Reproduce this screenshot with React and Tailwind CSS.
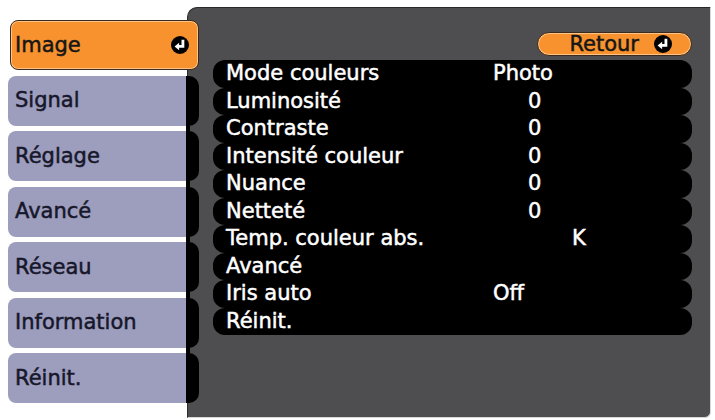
import React from "react";

function EnterIcon({ size = 17 }) {
  return (
    <svg width={size} height={size} viewBox="0 0 16 16" className="shrink-0">
      <circle cx="8" cy="8" r="8" fill="#000" />
      <path d="M10.6 3.4 V9.3 H6.6" fill="none" stroke="#fff" strokeWidth="2.5" strokeLinejoin="miter" />
      <path d="M3.2 9.3 L7.2 6 L7.2 12.6 Z" fill="#fff" />
    </svg>
  );
}

const tabs = ["Signal", "Réglage", "Avancé", "Réseau", "Information", "Réinit."];

const rows = [
  { label: "Mode couleurs", value: "Photo", v: "ml-0" },
  { label: "Luminosité", value: "0", v: "ml-[35px]" },
  { label: "Contraste", value: "0", v: "ml-[35px]" },
  { label: "Intensité couleur", value: "0", v: "ml-[35px]" },
  { label: "Nuance", value: "0", v: "ml-[35px]" },
  { label: "Netteté", value: "0", v: "ml-[35px]" },
  { label: "Temp. couleur abs.", value: "K", v: "ml-[79px]" },
  { label: "Avancé", value: "", v: "ml-0" },
  { label: "Iris auto", value: "Off", v: "ml-0" },
  { label: "Réinit.", value: "", v: "ml-0" },
];

export default function App() {
  return (
    <div className="w-[715px] h-[420px] bg-white flex overflow-hidden font-['DejaVu_Sans',sans-serif] text-[21px] leading-none [-webkit-text-stroke:0.5px]">
      {/* Tabs column */}
      <div className="relative z-10 w-[200px] shrink-0 pt-[20px] pl-[8px] flex flex-col gap-[5.5px]">
        <div className="ml-[2px] w-[189px] h-[50px] bg-[#f7922f] border border-[#3d2a18] rounded-[8px] shadow-[inset_0_0_0_1px_#fbc48a] flex items-center justify-between pl-[4px] pr-[9px] text-[#161616]">
          <span>Image</span>
          <EnterIcon size={18} />
        </div>
        <div className="flex flex-col gap-[5.5px] bg-[linear-gradient(to_right,transparent_178px,#000_178px,#000_182px,transparent_182px)]">
          {tabs.map((t) => (
            <div key={t} className="flex h-[50px]">
              <div className="w-[178px] h-full bg-[#9d9dbe] rounded-l-[8px] flex items-center pl-[7px] text-[#17172a]">
                {t}
              </div>
              <div className="w-[13px] h-full bg-black rounded-r-[10px]" />
            </div>
          ))}
        </div>
      </div>

      {/* Main panel */}
      <div className="ml-[-13px] mt-[7px] w-[524px] h-[411px] shrink-0 bg-[#4e4e50] rounded-tl-[10px] rounded-br-[6px] border border-t-[#2a2a2a] border-l-[#2a2a2a] border-r-[#d8d8d8] border-b-[#d8d8d8] flex flex-col">
        <div className="flex justify-end pr-[18px] pt-[24px]">
          <div className="w-[155px] h-[24px] bg-[#f7922f] border border-[#3d2a18] rounded-full shadow-[inset_0_0_0_1px_#fbc48a] flex items-center justify-end pr-[19px] gap-[15px] text-[#161616]">
            <span>Retour</span>
            <EnterIcon size={18} />
          </div>
        </div>
        <div className="mt-[4px] ml-[25px] w-[479px] flex flex-col bg-[linear-gradient(to_right,transparent_12px,#000_12px,#000_calc(100%-12px),transparent_calc(100%-12px))]">
          {rows.map((r) => (
            <div key={r.label} className="h-[27.5px] bg-black rounded-[12px] flex items-center pl-[13px] text-white">
              <span className="w-[267px] shrink-0">{r.label}</span>
              <span className={r.v}>{r.value}</span>
            </div>
          ))}
        </div>
      </div>
    </div>
  );
}
